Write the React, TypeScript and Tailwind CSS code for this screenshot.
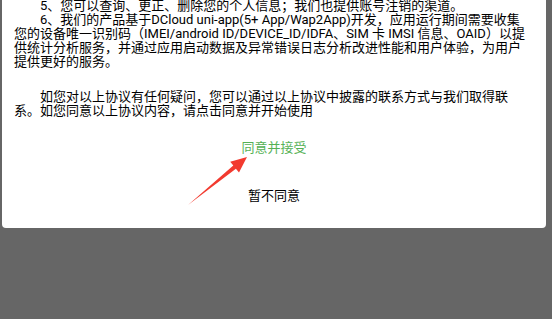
export default function App() {
  return (
    <div
      className="relative h-[319px] w-[552px] overflow-hidden bg-[#666666]"
      style={{ fontFamily: 'Roboto, "Noto Sans CJK SC", sans-serif' }}
    >
      <div className="ml-[2px] w-[544px] overflow-hidden rounded-b-[4px] bg-white pb-[12px]">
        <div className="-mt-[1px] pl-[12px] pr-[14px] text-[13px] leading-[14px] text-black">
          <div className="indent-[26px]">
            5、您可以查询、更正、删除您的个人信息；我们也提供账号注销的渠道。
          </div>
          <div className="indent-[26px]">
            6、我们的产品基于DCloud uni-app(5+ App/Wap2App)开发，应用运行期间需要收集您的设备唯一识别码（IMEI/android
            ID/DEVICE_ID/IDFA、SIM 卡 IMSI 信息、OAID）以提供统计分析服务，并通过应用启动数据及异常错误日志分析改进性能和用户体验，为用户提供更好的服务。
          </div>
          <div className="mt-[21px] indent-[26px]">
            如您对以上协议有任何疑问，您可以通过以上协议中披露的联系方式与我们取得联系。如您同意以上协议内容，请点击同意并开始使用
          </div>
        </div>
        <div className="mt-[10px] flex h-[40px] items-center justify-center text-[13px] text-[#55b155]">
          同意并接受
        </div>
        <div className="mt-[8px] flex h-[40px] items-center justify-center text-[13px] text-black">
          暂不同意
        </div>
      </div>
      <svg
        className="pointer-events-none absolute left-0 top-0"
        width="552"
        height="319"
        viewBox="0 0 552 319"
      >
        <polygon
          points="188,205 235.9,168.7 239,172.5 247,157 230.2,161.7 233.3,165.5"
          fill="#f23a2f"
        />
      </svg>
    </div>
  );
}
